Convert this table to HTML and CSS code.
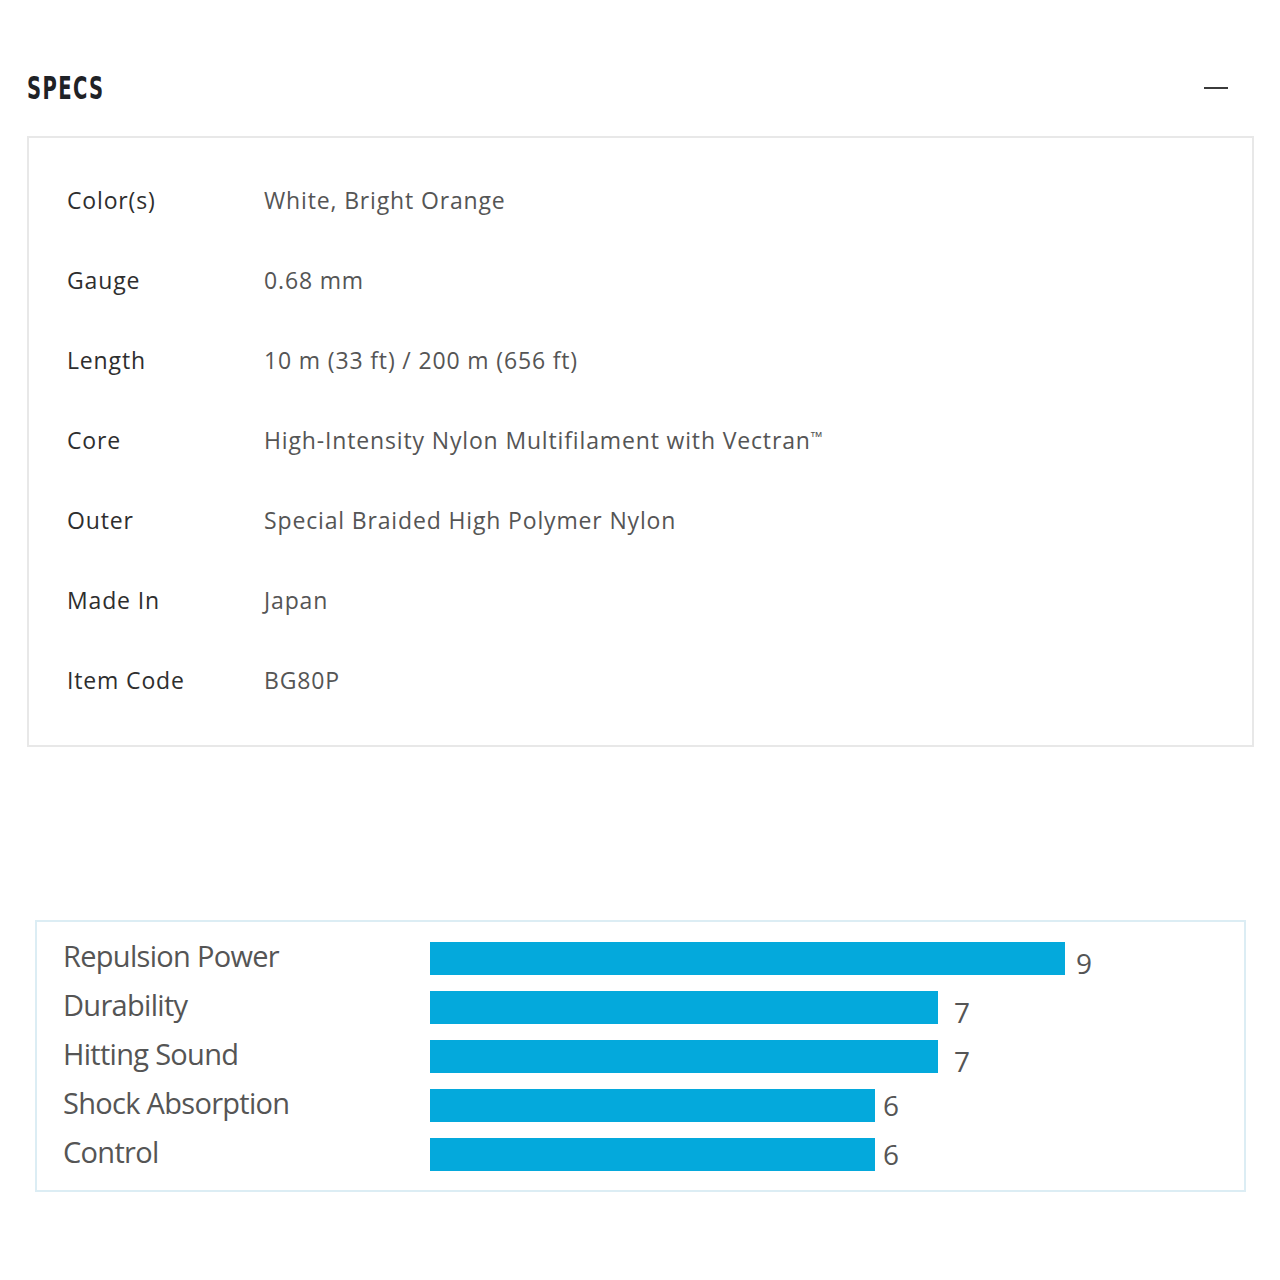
FILE: index.html
```html
<!DOCTYPE html>
<html lang="en">
<head>
<meta charset="utf-8">
<title>Specs</title>
<link rel="stylesheet" href="styles.css">
</head>
<body>
<section class="specs">
  <header class="specs-head">
    <h2 class="specs-title">SPECS</h2>
    <button class="toggle" aria-label="Collapse"><span class="minus"></span></button>
  </header>
  <div class="specs-box">
    <div class="row"><div class="label">Color(s)</div><div class="value">White, Bright Orange</div></div>
    <div class="row"><div class="label">Gauge</div><div class="value">0.68 mm</div></div>
    <div class="row"><div class="label">Length</div><div class="value">10 m (33 ft) / 200 m (656 ft)</div></div>
    <div class="row"><div class="label">Core</div><div class="value">High-Intensity Nylon Multifilament with Vectran<sup class="tm">™</sup></div></div>
    <div class="row"><div class="label">Outer</div><div class="value">Special Braided High Polymer Nylon</div></div>
    <div class="row"><div class="label">Made In</div><div class="value">Japan</div></div>
    <div class="row"><div class="label">Item Code</div><div class="value">BG80P</div></div>
  </div>
</section>
<section class="chart">
  <div class="bar-row"><div class="bar-label">Repulsion Power</div><div class="bar" style="width:635px"></div><div class="bar-num n9">9</div></div>
  <div class="bar-row"><div class="bar-label">Durability</div><div class="bar" style="width:508px"></div><div class="bar-num n7">7</div></div>
  <div class="bar-row"><div class="bar-label">Hitting Sound</div><div class="bar" style="width:508px"></div><div class="bar-num n7">7</div></div>
  <div class="bar-row"><div class="bar-label">Shock Absorption</div><div class="bar" style="width:445px"></div><div class="bar-num n6">6</div></div>
  <div class="bar-row"><div class="bar-label">Control</div><div class="bar" style="width:445px"></div><div class="bar-num n6">6</div></div>
</section>
</body>
</html>
```
FILE: styles.css
```css
* { box-sizing: border-box; }
html, body { margin: 0; padding: 0; background: #fff; }
body { width: 1280px; height: 1280px; }

.specs { padding-top: 58px; }
.specs-head {
  display: flex;
  align-items: center;
  justify-content: space-between;
  height: 60px;
  margin: 0 52px 18px 27px;
}
.specs-title {
  margin: 0;
  font-family: "DejaVu Sans Condensed", "DejaVu Sans", sans-serif;
  font-weight: 700;
  font-size: 32px;
  letter-spacing: 2px;
  color: #1f2226;
  transform: scaleX(0.68);
  transform-origin: left center;
}
.toggle {
  border: 0;
  background: none;
  padding: 0;
  width: 24px;
  height: 24px;
  display: flex;
  align-items: center;
}
.minus {
  display: block;
  width: 24px;
  height: 2px;
  background: #3b3b3b;
}

.specs-box {
  margin: 0 26px 0 27px;
  border: 2px solid #e8e8e8;
  padding: 22px 0 25px 38px;
}
.row {
  display: flex;
  align-items: center;
  height: 80px;
  font-family: "Open Sans", "Liberation Sans", sans-serif;
  font-size: 23px;
  letter-spacing: 0.85px;
}
.label { width: 197px; color: #2e2e2e; }
.value { color: #555; }
.tm {
  font-family: "Liberation Sans", sans-serif;
  font-size: 13px;
  vertical-align: 8px;
  line-height: 0;
  letter-spacing: 0;
  margin-left: -1px;
}

.chart {
  margin: 173px 34px 0 35px;
  border: 2px solid #dcedf4;
  padding: 20px 0 19px 26px;
  display: flex;
  flex-direction: column;
  gap: 16px;
}
.bar-row {
  display: flex;
  align-items: center;
  height: 33px;
}
.bar-label {
  width: 367px;
  flex: none;
  font-family: "Open Sans", "Liberation Sans", sans-serif;
  font-size: 29px;
  letter-spacing: -0.7px;
  color: #555;
  position: relative;
  top: -3px;
}
.bar { height: 33px; background: #04a9dc; flex: none; }
.bar-num {
  font-family: "Open Sans", "Liberation Sans", sans-serif;
  font-size: 28px;
  color: #555;
  margin-left: 11px;
  position: relative;
  top: 4px;
}
.n7 { margin-left: 16px; }
.n6 { margin-left: 8px; top: -1px; }
```
